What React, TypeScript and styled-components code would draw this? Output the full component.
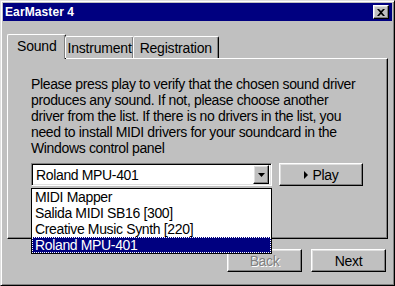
import React, { useState } from 'react';
import styled, { createGlobalStyle, css } from 'styled-components';

const GlobalStyle = createGlobalStyle`
  html, body {
    margin: 0;
    padding: 0;
    background: #c0c0c0;
  }
  body {
    font-family: "Liberation Sans", Arial, sans-serif;
  }
`;

const bevelOut = css`
  border: 1px solid;
  border-color: #ffffff #000000 #000000 #ffffff;
  box-shadow: inset -1px -1px 0 #808080, inset 1px 1px 0 #dfdfdf;
`;

const uiText = css`
  font-family: "Liberation Sans", Arial, sans-serif;
  font-size: 14px;
  letter-spacing: -0.35px;
`;

const Window = styled.div`
  width: 395px;
  height: 286px;
  box-sizing: border-box;
  background: #c0c0c0;
  border: 1px solid;
  border-color: #dfdfdf #000000 #000000 #dfdfdf;
  box-shadow: inset 1px 1px 0 #ffffff, inset -1px -1px 0 #808080;
  padding: 2px;
  display: flex;
  flex-direction: column;
`;

const TitleBar = styled.div`
  height: 18px;
  background: #000080;
  display: flex;
  align-items: center;
  justify-content: space-between;
  padding: 0 3px 0 2px;
`;

const Title = styled.span`
  color: #ffffff;
  font-weight: bold;
  font-size: 12px;
  letter-spacing: 0.1px;
`;

const CloseButton = styled.div`
  width: 16px;
  height: 14px;
  box-sizing: border-box;
  background: #c0c0c0;
  ${bevelOut};
  display: flex;
  align-items: center;
  justify-content: center;
`;

const Body = styled.div`
  position: relative;
  flex: 1;
  display: flex;
  flex-direction: column;
  padding: 12px 4px 0 4px;
`;

const TabRow = styled.div`
  display: flex;
  align-items: flex-end;
  height: 25px;
  position: relative;
  z-index: 1;
`;

const Tab = styled.div<{ $active?: boolean; $pad: number }>`
  box-sizing: border-box;
  height: ${(p) => (p.$active ? 25 : 22)}px;
  padding: ${(p) => (p.$active ? `3px ${p.$pad}px 0 ${p.$pad}px` : `1px ${p.$pad}px 0 ${p.$pad}px`)};
  margin-bottom: ${(p) => (p.$active ? -1 : 0)}px;
  margin-left: ${(p) => (p.$active ? 0 : -1)}px;
  ${uiText};
  letter-spacing: -0.2px;
  color: #000;
  background: #c0c0c0;
  border-top: 1px solid #ffffff;
  border-left: 1px solid #ffffff;
  border-right: 1px solid #000000;
  border-radius: 2px 2px 0 0;
  box-shadow: inset -1px 0 0 #808080;
  display: flex;
  align-items: ${(p) => (p.$active ? 'flex-start' : 'center')};
`;

const Panel = styled.div`
  height: 181px;
  box-sizing: border-box;
  border: 1px solid;
  border-color: #ffffff #000000 #000000 #ffffff;
  box-shadow: inset -1px -1px 0 #808080;
  padding: 17px 20px 0 23px;
`;

const Info = styled.p`
  margin: 0;
  ${uiText};
  line-height: 16px;
  color: #000;
`;

const ControlRow = styled.div`
  display: flex;
  align-items: flex-start;
  gap: 7px;
  margin-top: 7px;
`;

const Combo = styled.div`
  position: relative;
  width: 241px;
  height: 23px;
  box-sizing: border-box;
  background: #ffffff;
  border: 1px solid;
  border-color: #808080 #ffffff #ffffff #808080;
  box-shadow: inset 1px 1px 0 #000000, inset -1px -1px 0 #dfdfdf;
  display: flex;
  align-items: center;
  padding: 0 2px 0 4px;
`;

const ComboText = styled.span`
  flex: 1;
  ${uiText};
  color: #000;
`;

const ArrowButton = styled.div`
  width: 16px;
  height: 19px;
  box-sizing: border-box;
  background: #c0c0c0;
  ${bevelOut};
  display: flex;
  align-items: center;
  justify-content: center;
`;

const DropList = styled.div`
  position: absolute;
  left: -1px;
  top: 24px;
  width: 241px;
  box-sizing: border-box;
  background: #ffffff;
  border: 1px solid #000000;
  z-index: 5;
`;

const ListItem = styled.div<{ $selected?: boolean }>`
  height: 16px;
  line-height: 16px;
  ${uiText};
  padding-left: 3px;
  box-sizing: border-box;
  color: ${(p) => (p.$selected ? '#ffffff' : '#000000')};
  background: ${(p) => (p.$selected ? '#000080' : 'transparent')};
  outline: ${(p) => (p.$selected ? '1px dotted #ffffff' : 'none')};
  outline-offset: -1px;
  white-space: nowrap;
`;

const PushButton = styled.button<{ $disabled?: boolean; $wide?: boolean }>`
  box-sizing: border-box;
  width: ${(p) => (p.$wide ? 84 : 75)}px;
  height: 23px;
  background: #c0c0c0;
  ${bevelOut};
  ${uiText};
  color: ${(p) => (p.$disabled ? '#808080' : '#000000')};
  text-shadow: ${(p) => (p.$disabled ? '1px 1px 0 #ffffff' : 'none')};
  display: flex;
  align-items: center;
  justify-content: center;
  gap: 5px;
  padding: 0;
`;

const Footer = styled.div`
  display: flex;
  justify-content: flex-end;
  gap: 9px;
  padding: 10px 2px 0 0;
`;

const drivers = ['MIDI Mapper', 'Salida MIDI SB16 [300]', 'Creative Music Synth [220]', 'Roland MPU-401'];

export default function App() {
  const [selected, setSelected] = useState(3);
  return (
    <>
      <GlobalStyle />
      <Window>
        <TitleBar>
          <Title>EarMaster 4</Title>
          <CloseButton>
            <svg width="8" height="7" viewBox="0 0 8 7">
              <path d="M0 0h2l2 2 2-2h2L5 3.5 8 7H6L4 5 2 7H0l3-3.5z" fill="#000" />
            </svg>
          </CloseButton>
        </TitleBar>
        <Body>
          <TabRow>
            <Tab $active $pad={9}>Sound</Tab>
            <Tab $pad={1}>Instrument</Tab>
            <Tab $pad={6}>Registration</Tab>
          </TabRow>
          <Panel>
            <Info>
              Please press play to verify that the chosen sound driver
              <br />
              produces any sound. If not, please choose another
              <br />
              driver from the list. If there is no drivers in the list, you
              <br />
              need to install MIDI drivers for your soundcard in the
              <br />
              Windows control panel
            </Info>
            <ControlRow>
              <Combo>
                <ComboText>{drivers[selected]}</ComboText>
                <ArrowButton>
                  <svg width="7" height="4" viewBox="0 0 7 4">
                    <path d="M0 0h7L3.5 4z" fill="#000" />
                  </svg>
                </ArrowButton>
                <DropList>
                  {drivers.map((d, i) => (
                    <ListItem key={d} $selected={i === selected} onClick={() => setSelected(i)}>
                      {d}
                    </ListItem>
                  ))}
                </DropList>
              </Combo>
              <PushButton $wide>
                <svg width="4" height="8" viewBox="0 0 4 8">
                  <path d="M0 0l4 4-4 4z" fill="#000" />
                </svg>
                Play
              </PushButton>
            </ControlRow>
          </Panel>
          <Footer>
            <PushButton $disabled>Back</PushButton>
            <PushButton>Next</PushButton>
          </Footer>
        </Body>
      </Window>
    </>
  );
}
